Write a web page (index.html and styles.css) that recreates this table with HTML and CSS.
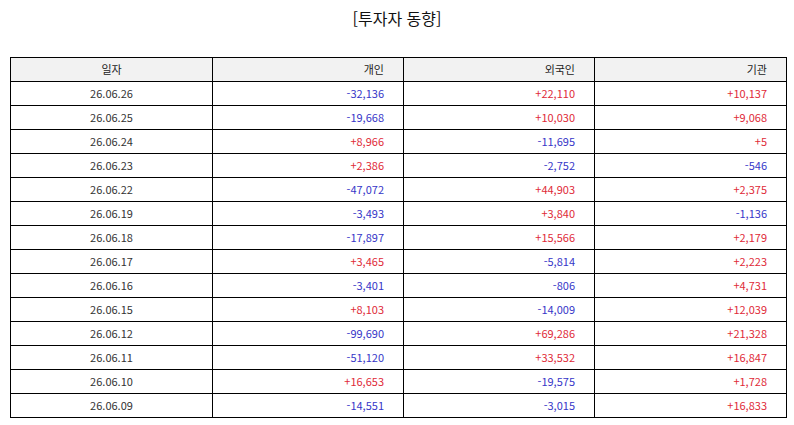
FILE: index.html
```html
<!DOCTYPE html>
<html lang="ko">
<head>
<meta charset="utf-8">
<link rel="stylesheet" href="styles.css">
</head>
<body>
<h1 class="title">[투자자 동향]</h1>
<table class="grid">
<colgroup><col class="c1"><col class="c2"><col class="c3"><col class="c4"></colgroup>
<thead>
<tr><th class="date">일자</th><th>개인</th><th>외국인</th><th>기관</th></tr>
</thead>
<tbody>
<tr><td class="date">26.06.26</td><td class="dn">-32,136</td><td class="up">+22,110</td><td class="up">+10,137</td></tr>
<tr><td class="date">26.06.25</td><td class="dn">-19,668</td><td class="up">+10,030</td><td class="up">+9,068</td></tr>
<tr><td class="date">26.06.24</td><td class="up">+8,966</td><td class="dn">-11,695</td><td class="up">+5</td></tr>
<tr><td class="date">26.06.23</td><td class="up">+2,386</td><td class="dn">-2,752</td><td class="dn">-546</td></tr>
<tr><td class="date">26.06.22</td><td class="dn">-47,072</td><td class="up">+44,903</td><td class="up">+2,375</td></tr>
<tr><td class="date">26.06.19</td><td class="dn">-3,493</td><td class="up">+3,840</td><td class="dn">-1,136</td></tr>
<tr><td class="date">26.06.18</td><td class="dn">-17,897</td><td class="up">+15,566</td><td class="up">+2,179</td></tr>
<tr><td class="date">26.06.17</td><td class="up">+3,465</td><td class="dn">-5,814</td><td class="up">+2,223</td></tr>
<tr><td class="date">26.06.16</td><td class="dn">-3,401</td><td class="dn">-806</td><td class="up">+4,731</td></tr>
<tr><td class="date">26.06.15</td><td class="up">+8,103</td><td class="dn">-14,009</td><td class="up">+12,039</td></tr>
<tr><td class="date">26.06.12</td><td class="dn">-99,690</td><td class="up">+69,286</td><td class="up">+21,328</td></tr>
<tr><td class="date">26.06.11</td><td class="dn">-51,120</td><td class="up">+33,532</td><td class="up">+16,847</td></tr>
<tr><td class="date">26.06.10</td><td class="up">+16,653</td><td class="dn">-19,575</td><td class="up">+1,728</td></tr>
<tr><td class="date">26.06.09</td><td class="dn">-14,551</td><td class="dn">-3,015</td><td class="up">+16,833</td></tr>
</tbody>
</table>
</body>
</html>
```
FILE: styles.css
```css
html, body {
  margin: 0;
  padding: 0;
  background: #ffffff;
}
body {
  font-family: "Noto Sans CJK KR", "Noto Sans", sans-serif;
  color: #333333;
}
.title {
  margin: 0;
  padding-top: 6px;
  height: 57px;
  box-sizing: border-box;
  text-align: center;
  font-size: 16px;
  font-weight: normal;
  line-height: 24px;
  color: #111111;
}
.grid {
  margin-left: 10px;
  width: 776px;
  border-collapse: collapse;
  table-layout: fixed;
  font-size: 11px;
}
.c1 { width: 202px; }
.c2 { width: 191px; }
.c3 { width: 191px; }
.c4 { width: 192px; }
.grid th, .grid td {
  border: 1px solid #000000;
  height: 24px;
  padding: 0 19px 0 0;
  text-align: right;
  font-weight: normal;
  line-height: 23px;
  box-sizing: border-box;
}
.grid th {
  background: #f2f2f2;
  color: #222222;
}
.grid .date {
  text-align: center;
  padding: 0;
}
.up { color: #e02a38; }
.dn { color: #3636c8; }
```
